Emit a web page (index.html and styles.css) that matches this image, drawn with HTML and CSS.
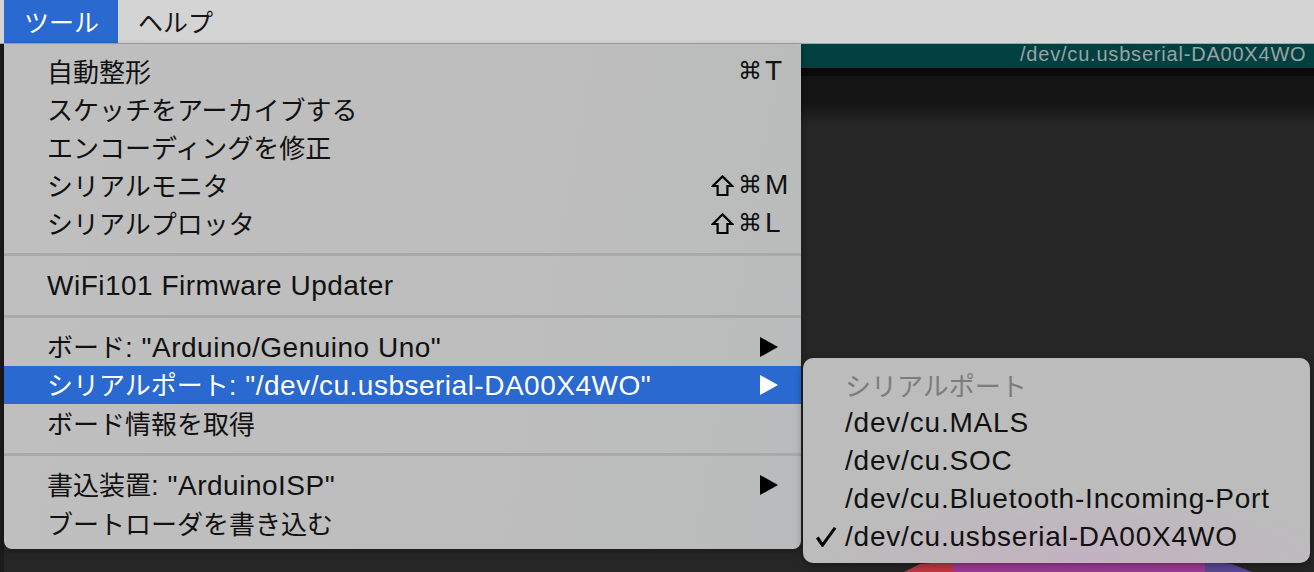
FILE: index.html
```html
<!DOCTYPE html>
<html lang="ja">
<head>
<meta charset="utf-8">
<title>Arduino ツール menu</title>
<link rel="stylesheet" href="styles.css">
</head>
<body>
<header class="menubar">
  <span class="mb-item active">ツール</span>
  <span class="mb-item">ヘルプ</span>
</header>
<main class="desktop">
  <section class="editor">
    <div class="toolbar"><span class="port">/dev/cu.usbserial-DA00X4WO</span></div>
    <div class="tabs"></div>
    <div class="code"></div>
    <svg class="logo" width="400" height="12" viewBox="0 0 400 12">
      <path d="M24 12 L40 4 L75 1 L75 12 Z" fill="#c23a44"/>
      <path d="M73 12 L73 1 L326 1 L326 12 Z" fill="#a03d98"/>
      <path d="M325 12 L325 1 L352 4 L372 12 Z" fill="#5b4a9b"/>
    </svg>
  </section>

  <nav class="menu main-menu">
    <div class="row"><span class="label">自動整形</span><span class="keys"><span class="mods"><span class="cmd">⌘</span></span><span class="key">T</span></span></div>
    <div class="row"><span class="label">スケッチをアーカイブする</span></div>
    <div class="row"><span class="label">エンコーディングを修正</span></div>
    <div class="row"><span class="label">シリアルモニタ</span><span class="keys"><span class="mods"><svg class="shift" width="23" height="21" viewBox="0 0 23 21"><path d="M11.5 1.4 L21.2 11 L16.4 11 L16.4 20 L6.6 20 L6.6 11 L1.8 11 Z"/></svg><span class="cmd">⌘</span></span><span class="key">M</span></span></div>
    <div class="row"><span class="label">シリアルプロッタ</span><span class="keys"><span class="mods"><svg class="shift" width="23" height="21" viewBox="0 0 23 21"><path d="M11.5 1.4 L21.2 11 L16.4 11 L16.4 20 L6.6 20 L6.6 11 L1.8 11 Z"/></svg><span class="cmd">⌘</span></span><span class="key">L</span></span></div>
    <div class="sep"></div>
    <div class="row"><span class="label"><span class="en">WiFi101 Firmware Updater</span></span></div>
    <div class="sep"></div>
    <div class="row"><span class="label">ボード<span class="en">: "Arduino/Genuino Uno"</span></span><svg class="arrow" width="18" height="20" viewBox="0 0 18 20"><path d="M0 0 L18 10 L0 20 Z"/></svg></div>
    <div class="row selected"><span class="label">シリアルポート<span class="en">: "/dev/cu.usbserial-DA00X4WO"</span></span><svg class="arrow" width="18" height="20" viewBox="0 0 18 20"><path d="M0 0 L18 10 L0 20 Z"/></svg></div>
    <div class="row"><span class="label">ボード情報を取得</span></div>
    <div class="sep"></div>
    <div class="row"><span class="label">書込装置<span class="en">: "ArduinoISP"</span></span><svg class="arrow" width="18" height="20" viewBox="0 0 18 20"><path d="M0 0 L18 10 L0 20 Z"/></svg></div>
    <div class="row"><span class="label">ブートローダを書き込む</span></div>
  </nav>

  <nav class="menu submenu">
    <div class="row header"><span class="check"></span><span class="label">シリアルポート</span></div>
    <div class="row"><span class="check"></span><span class="label en">/dev/cu.MALS</span></div>
    <div class="row"><span class="check"></span><span class="label en">/dev/cu.SOC</span></div>
    <div class="row"><span class="check"></span><span class="label en">/dev/cu.Bluetooth-Incoming-Port</span></div>
    <div class="row"><span class="check"><svg width="22" height="22" viewBox="0 0 22 22"><path d="M1 12.5 L3.6 10.6 L7.6 16.4 L18.8 1 L21.4 2.6 L8 21 L6.8 21 Z"/></svg></span><span class="label en">/dev/cu.usbserial-DA00X4WO</span></div>
  </nav>
</main>
</body>
</html>
```

FILE: styles.css
```css
* { box-sizing: border-box; }

html, body {
  margin: 0;
  height: 572px;
  overflow: hidden;
}

body {
  background: #262626;
  font-family: "Noto Sans CJK JP", "Liberation Sans", sans-serif;
  color: #111;
}

.menubar {
  display: flex;
  height: 44px;
  padding-left: 4px;
  background: #d4d4d4;
  border-bottom: 1px solid #a6a6a6;
}

.mb-item {
  padding: 0 19px 0 20px;
  font-size: 25px;
  line-height: 43px;
  color: #161616;
}

.mb-item.active {
  background: #2a69cf;
  color: #fff;
}

.desktop {
  position: relative;
  height: 528px;
}

.editor {
  position: relative;
  height: 100%;
  display: flex;
  flex-direction: column;
  border-left: 4px solid #1b1b1b;
}

.toolbar {
  height: 24px;
  flex: none;
  background: #014040;
  padding-left: 1016px;
  overflow: hidden;
  white-space: nowrap;
}

.port {
  display: block;
  font-family: "Liberation Sans", sans-serif;
  font-size: 20px;
  letter-spacing: 0.8px;
  line-height: 20px;
  color: #9aa3a3;
}

.tabs {
  height: 8px;
  flex: none;
  background: #0a0a0a;
}

.code {
  flex: 1;
  background: linear-gradient(to bottom, #141414 0, #141414 26px, #262626 50px, #262626 100%);
}

.logo {
  position: absolute;
  left: 876px;
  bottom: 0;
}

/* menus */
.menu {
  position: absolute;
  font-size: 26px;
}

.main-menu {
  left: 4px;
  top: 0;
  width: 797px;
  height: 505px;
  padding: 8px 0 7px;
  border-radius: 0 0 8px 8px;
  background: linear-gradient(100deg, #bfbfbf 0%, #bdbdbd 70%, #b9bcbc 100%);
  box-shadow: 0 2px 6px rgba(0, 0, 0, 0.35);
}

.submenu {
  left: 803px;
  top: 314px;
  width: 507px;
  height: 205px;
  padding: 8px 0 7px;
  border-radius: 10px;
  background:
    radial-gradient(ellipse 260px 70px at 55% 100%, rgba(205, 165, 200, 0.45), rgba(205, 165, 200, 0) 100%),
    #bcbcbc;
  box-shadow: 0 3px 8px rgba(0, 0, 0, 0.35);
}

.row {
  display: flex;
  align-items: center;
  height: 38px;
  white-space: nowrap;
}

.main-menu .row {
  padding: 0 10px 0 43px;
}

.row .label {
  flex: 1;
  line-height: 38px;
}

.en {
  font-family: "Liberation Sans", sans-serif;
  font-size: 28px;
  letter-spacing: 0.5px;
}

.submenu .en {
  letter-spacing: 0.8px;
}

.row.selected {
  background: #2a69cf;
  color: #fff;
}

.keys {
  display: flex;
  align-items: center;
  width: 85px;
}

.mods {
  width: 56px;
  margin-right: 3px;
  display: flex;
  justify-content: flex-end;
  align-items: center;
  gap: 4px;
}

.cmd {
  font-family: "DejaVu Sans", sans-serif;
  font-size: 24px;
  line-height: 38px;
}

.shift {
  fill: none;
  stroke: #000;
  stroke-width: 2.2;
  stroke-linejoin: miter;
}

.key {
  width: 26px;
  font-family: "Liberation Sans", sans-serif;
  font-size: 28px;
  line-height: 38px;
}

.arrow {
  margin-right: 13px;
  fill: #000;
}

.row.selected .arrow {
  fill: #fff;
}

.sep {
  height: 24px;
  display: flex;
  align-items: center;
}

.sep::before {
  content: "";
  flex: 1;
  height: 3px;
  background: #a9a9a9;
}

.submenu .row .check {
  width: 42px;
  height: 38px;
  flex: none;
  display: flex;
  align-items: center;
  padding-left: 12px;
}

.check svg {
  fill: #000;
}

.submenu .row.header {
  color: #7c7c7c;
}
```
